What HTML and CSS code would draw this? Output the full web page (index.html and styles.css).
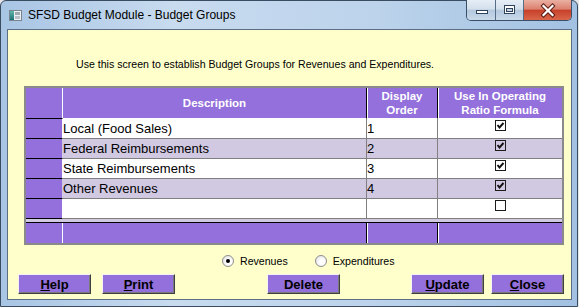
FILE: index.html
```html
<!DOCTYPE html>
<html lang="en">
<head>
    <meta charset="UTF-8">
    <meta name="viewport" content="width=device-width, initial-scale=1.0">
    <title>SFSD Budget Module - Budget Groups</title>
    <link rel="stylesheet" href="styles.css">
</head>
<body>
    <div class="window">
        <!-- Title bar -->
        <div class="titlebar">
            <svg class="app-icon" width="13" height="11" viewBox="0 0 13 11">
                <defs>
                    <linearGradient id="iconPane" x1="0" y1="0" x2="0" y2="1">
                        <stop offset="0" stop-color="#5fb7a8"/>
                        <stop offset="1" stop-color="#1f6f78"/>
                    </linearGradient>
                </defs>
                <rect x="0.5" y="0.5" width="12" height="10" fill="#eef1f4" stroke="#7a848f"/>
                <rect x="1" y="1" width="4" height="9" fill="url(#iconPane)"/>
                <rect x="6" y="2" width="5" height="3" fill="#9ea8b2"/>
                <rect x="6" y="6" width="5" height="3" fill="#b7bfc7"/>
            </svg>
            <span class="title">SFSD Budget Module - Budget Groups</span>
            <div class="caption-buttons">
                <div class="cap cap-min">
                    <svg width="28" height="20" viewBox="0 0 28 20">
                        <rect x="9.5" y="10.5" width="11" height="3" fill="#fff" stroke="#2e425a"/>
                    </svg>
                </div>
                <div class="cap cap-max">
                    <svg width="27" height="20" viewBox="0 0 27 20">
                        <rect x="8.5" y="5.5" width="10" height="8" fill="#fff" stroke="#2e425a"/>
                        <rect x="10.5" y="8.5" width="6" height="3" fill="#c4d4e6" stroke="#2e425a"/>
                    </svg>
                </div>
                <div class="cap cap-close">
                    <svg width="47" height="20" viewBox="0 0 47 20">
                        <path d="M19.5 6 L28.5 15 M28.5 6 L19.5 15" stroke="#5a1d14" stroke-width="4.2" stroke-linecap="square"/>
                        <path d="M19.5 6 L28.5 15 M28.5 6 L19.5 15" stroke="#fff" stroke-width="2.2" stroke-linecap="square"/>
                    </svg>
                </div>
            </div>
        </div>

        <!-- Form area -->
        <div class="client">
            <p class="intro">Use this screen to establish Budget Groups for Revenues and Expenditures.</p>

            <div class="grid">
                <div class="row head">
                    <div class="cell rh"></div>
                    <div class="cell desc">Description</div>
                    <div class="cell order">Display<br>Order</div>
                    <div class="cell use">Use In Operating<br>Ratio Formula</div>
                </div>
                <div class="row data">
                    <div class="cell rh"></div>
                    <div class="cell desc">Local (Food Sales)</div>
                    <div class="cell order">1</div>
                    <div class="cell use"><span class="chk checked"></span></div>
                </div>
                <div class="row data alt">
                    <div class="cell rh"></div>
                    <div class="cell desc">Federal Reimbursements</div>
                    <div class="cell order">2</div>
                    <div class="cell use"><span class="chk checked"></span></div>
                </div>
                <div class="row data">
                    <div class="cell rh"></div>
                    <div class="cell desc">State Reimbursements</div>
                    <div class="cell order">3</div>
                    <div class="cell use"><span class="chk checked"></span></div>
                </div>
                <div class="row data alt">
                    <div class="cell rh"></div>
                    <div class="cell desc">Other Revenues</div>
                    <div class="cell order">4</div>
                    <div class="cell use"><span class="chk checked"></span></div>
                </div>
                <div class="row data">
                    <div class="cell rh"></div>
                    <div class="cell desc"></div>
                    <div class="cell order"></div>
                    <div class="cell use"><span class="chk"></span></div>
                </div>
                <div class="strip"></div>
                <div class="row foot">
                    <div class="cell rh"></div>
                    <div class="cell desc"></div>
                    <div class="cell order"></div>
                    <div class="cell use"></div>
                </div>
            </div>

            <div class="options">
                <label class="opt"><span class="radio on"></span>Revenues</label>
                <label class="opt"><span class="radio"></span>Expenditures</label>
            </div>

            <div class="buttons">
                <button type="button" class="btn btn-help"><u>H</u>elp</button>
                <button type="button" class="btn btn-print"><u>P</u>rint</button>
                <button type="button" class="btn btn-delete">Delete</button>
                <button type="button" class="btn btn-update"><u>U</u>pdate</button>
                <button type="button" class="btn btn-close"><u>C</u>lose</button>
            </div>
        </div>
    </div>
</body>
</html>
```

FILE: styles.css
```css
/* Window frame */
body {
    margin: 0;
    background-color: #e4e6e9;
    font-family: "Liberation Sans", Arial, sans-serif;
}

.window {
    width: 578px;
    height: 307px;
    box-sizing: border-box;
    border: 1px solid #3a4c60;
    border-radius: 6px 6px 0 0;
    background: linear-gradient(to right, #a8c5e4 0%, #c8dbef 30%, #bcd3eb 65%, #a2c1e2 100%);
    display: flex;
    flex-direction: column;
}

.titlebar {
    height: 28px;
    display: flex;
    align-items: center;
    padding-left: 8px;
}

.app-icon {
    margin-right: 6px;
}

.title {
    font-size: 12px;
    line-height: 14px;
    color: #000;
}

.caption-buttons {
    display: flex;
    align-self: flex-start;
    margin: -1px 5px 0 auto;
    border: 1px solid #3b5068;
    border-top: none;
    border-radius: 0 0 5px 5px;
    overflow: hidden;
}

.cap {
    height: 20px;
    background: linear-gradient(#e6eef6 0%, #d3dfec 45%, #b4c8de 52%, #c9d9ea 100%);
}

.cap svg {
    display: block;
}

.cap-min {
    width: 28px;
    border-right: 1px solid #566d87;
}

.cap-max {
    width: 27px;
    border-right: 1px solid #566d87;
}

.cap-close {
    width: 47px;
    background: linear-gradient(#eab0a2 0%, #dc8170 45%, #c7412b 52%, #d9664a 100%);
}

/* Client area */
.client {
    flex: 1;
    margin: 0 5px 6px 6px;
    border: 1px solid #5b6e83;
    background-color: #ffffcc;
}

.intro {
    margin: 0;
    padding: 28px 0 0 68px;
    font-size: 10.6px;
    line-height: 13px;
    color: #000;
}

/* Grid */
.grid {
    width: 536px;
    margin: 15px 0 0 16px;
    border: 2px solid #8a8a8a;
}

.row {
    display: flex;
    height: 20px;
    background-color: #fff;
}

.row.alt {
    background-color: #d1c9e2;
}

.cell {
    box-sizing: border-box;
    height: 100%;
    border-right: 1px solid #808080;
    border-bottom: 1px solid #808080;
    overflow: hidden;
    white-space: nowrap;
}

.rh {
    width: 37px;
    background-color: #9370db;
    background-clip: padding-box;
    border-right-color: transparent;
    border-bottom-color: #000;
}

.desc {
    width: 304px;
}

.order {
    width: 71px;
}

.use {
    width: 124px;
    border-right: none;
}

.data .cell {
    font-size: 13px;
    line-height: 19px;
    color: #000;
}

.head {
    height: 31px;
    background-color: #9370db;
}

.head .cell {
    display: flex;
    align-items: center;
    justify-content: center;
    text-align: center;
    color: #fff;
    font-weight: bold;
    font-size: 11.5px;
    line-height: 14px;
    border-bottom-color: #fff;
}

.head .rh {
    border-right-color: #fff;
    border-bottom-color: #000;
}

.head .desc,
.head .order,
.foot .desc,
.foot .order {
    border-right-color: #000;
}

.head .order,
.head .use,
.foot .order,
.foot .use {
    box-shadow: inset 1px 0 0 #fff;
}

.strip {
    height: 4px;
    box-sizing: border-box;
    background-color: #d1c9e2;
    border-bottom: 1px solid #000;
}

.foot {
    background-color: #9370db;
}

.foot .cell {
    border-bottom: none;
}

.foot .rh {
    border-right-color: #fff;
}

/* Checkboxes */
.chk {
    display: block;
    width: 11px;
    height: 11px;
    box-sizing: border-box;
    margin: 1px auto 0;
    border: 1px solid #1c1c1c;
}

.chk.checked {
    background: url("data:image/svg+xml,%3Csvg xmlns='http://www.w3.org/2000/svg' width='9' height='9'%3E%3Cpath d='M1.5 4 L3.5 6.5 L7.5 2' fill='none' stroke='%23111' stroke-width='1.9'/%3E%3C/svg%3E") no-repeat center;
}

/* Radio options */
.options {
    display: flex;
    align-items: center;
    height: 13px;
    margin: 9px 0 0 214px;
    font-size: 10.6px;
    color: #000;
}

.opt {
    display: flex;
    align-items: center;
    gap: 6px;
}

.opt + .opt {
    margin-left: 27px;
}

.radio {
    width: 12px;
    height: 12px;
    box-sizing: border-box;
    border-radius: 50%;
    border: 1px solid #8f8f8f;
    background: radial-gradient(circle at 60% 60%, #fff 30%, #d8d8d8 100%);
    position: relative;
}

.radio.on::after {
    content: "";
    position: absolute;
    left: 3px;
    top: 3px;
    width: 4px;
    height: 4px;
    border-radius: 50%;
    background-color: #000;
}

/* Buttons */
.buttons {
    display: flex;
    margin-top: 7px;
}

.btn {
    width: 73px;
    height: 20px;
    box-sizing: border-box;
    padding: 0;
    background-color: #9370db;
    border: 1px solid;
    border-color: #f4f4f4 #404040 #404040 #f4f4f4;
    box-shadow: inset -1px -1px 0 #7a7a7a;
    font-family: "Liberation Sans", Arial, sans-serif;
    font-size: 13px;
    font-weight: bold;
    line-height: 17px;
    color: #000;
    cursor: pointer;
}

.btn-help {
    margin-left: 10px;
}

.btn-print {
    margin-left: 11px;
}

.btn-delete {
    margin-left: 92px;
}

.btn-update {
    margin-left: 71px;
}

.btn-close {
    margin-left: 7px;
}
```
